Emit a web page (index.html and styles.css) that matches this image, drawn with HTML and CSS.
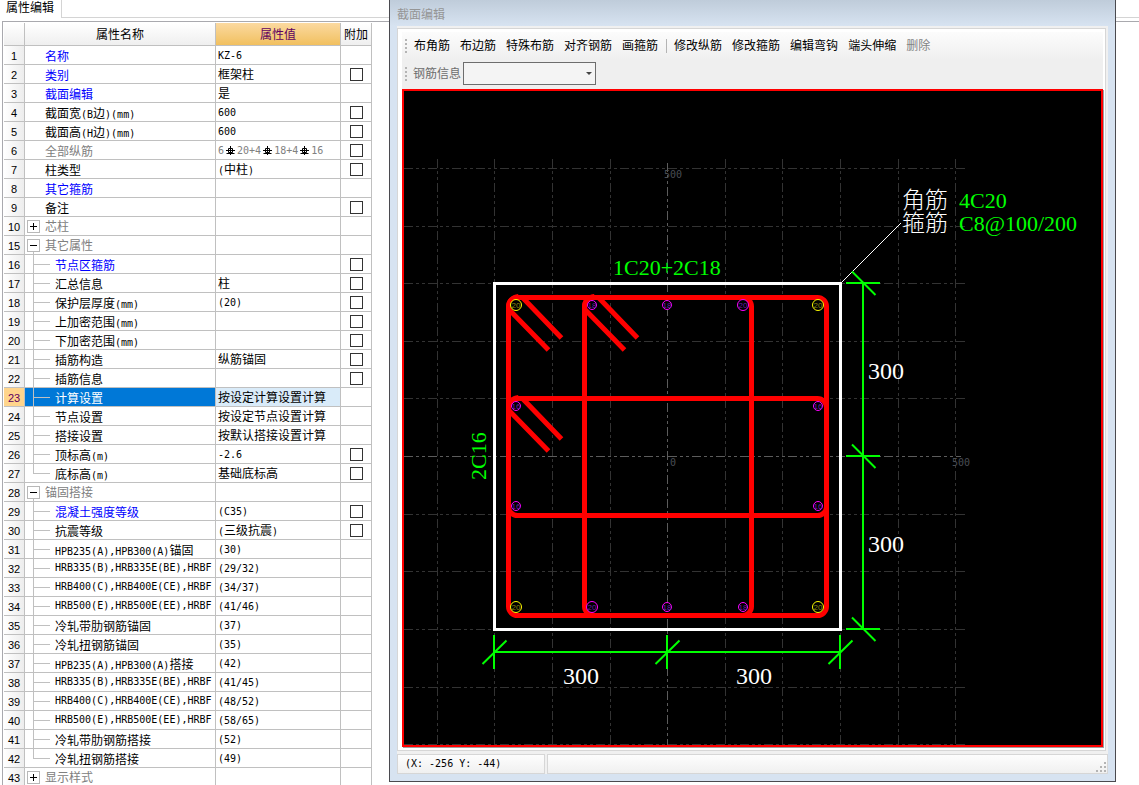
FILE: index.html
```html
<!DOCTYPE html>
<html lang="zh-CN">
<head>
<meta charset="utf-8">
<title>属性编辑</title>
<link rel="stylesheet" href="styles.css">
</head>
<body>
<main class="desk">
<section class="props">
<div class="tabs"><button class="tab" type="button">属性编辑</button><div class="tab-rest"></div></div>
<div class="grid-wrap">
<table class="grid">
<colgroup><col class="c-no"><col class="c-name"><col class="c-val"><col class="c-add"></colgroup>
<thead><tr><th></th><th>属性名称</th><th class="active">属性值</th><th>附加</th></tr></thead>
<tbody>
<tr><th>1</th><td class="top blue">名称</td><td class="mono">KZ-6</td><td></td></tr>
<tr><th>2</th><td class="top blue">类别</td><td>框架柱</td><td><input type="checkbox" aria-label="类别"></td></tr>
<tr><th>3</th><td class="top blue">截面编辑</td><td>是</td><td></td></tr>
<tr><th>4</th><td class="top">截面宽<span class="mono">(B</span>边<span class="mono">)(mm)</span></td><td class="mono">600</td><td><input type="checkbox" aria-label="截面宽"></td></tr>
<tr><th>5</th><td class="top">截面高<span class="mono">(H</span>边<span class="mono">)(mm)</span></td><td class="mono">600</td><td><input type="checkbox" aria-label="截面高"></td></tr>
<tr><th>6</th><td class="top gray">全部纵筋</td><td class="mono gray">6<svg class="bar" viewBox="0 0 13 11"><use href="#rebar"/></svg>20+4<svg class="bar" viewBox="0 0 13 11"><use href="#rebar"/></svg>18+4<svg class="bar" viewBox="0 0 13 11"><use href="#rebar"/></svg>16</td><td><input type="checkbox" aria-label="全部纵筋"></td></tr>
<tr><th>7</th><td class="top">柱类型</td><td><span class="mono">(</span>中柱<span class="mono">)</span></td><td><input type="checkbox" aria-label="柱类型"></td></tr>
<tr><th>8</th><td class="top blue">其它箍筋</td><td></td><td></td></tr>
<tr><th>9</th><td class="top">备注</td><td></td><td><input type="checkbox" aria-label="备注"></td></tr>
<tr><th>10</th><td class="group gray"><div><button class="exp plus" type="button" aria-label="展开"></button>芯柱</div></td><td></td><td></td></tr>
<tr><th>15</th><td class="group gray open"><div><button class="exp" type="button" aria-label="折叠"></button>其它属性</div></td><td></td><td></td></tr>
<tr><th>16</th><td class="kid blue">节点区箍筋</td><td></td><td><input type="checkbox" aria-label="节点区箍筋"></td></tr>
<tr><th>17</th><td class="kid">汇总信息</td><td>柱</td><td><input type="checkbox" aria-label="汇总信息"></td></tr>
<tr><th>18</th><td class="kid">保护层厚度<span class="mono">(mm)</span></td><td class="mono">(20)</td><td><input type="checkbox" aria-label="保护层厚度"></td></tr>
<tr><th>19</th><td class="kid">上加密范围<span class="mono">(mm)</span></td><td></td><td><input type="checkbox" aria-label="上加密范围"></td></tr>
<tr><th>20</th><td class="kid">下加密范围<span class="mono">(mm)</span></td><td></td><td><input type="checkbox" aria-label="下加密范围"></td></tr>
<tr><th>21</th><td class="kid">插筋构造</td><td>纵筋锚固</td><td><input type="checkbox" aria-label="插筋构造"></td></tr>
<tr><th>22</th><td class="kid">插筋信息</td><td></td><td><input type="checkbox" aria-label="插筋信息"></td></tr>
<tr class="selected"><th>23</th><td class="kid">计算设置</td><td>按设定计算设置计算</td><td></td></tr>
<tr><th>24</th><td class="kid">节点设置</td><td>按设定节点设置计算</td><td></td></tr>
<tr><th>25</th><td class="kid">搭接设置</td><td>按默认搭接设置计算</td><td></td></tr>
<tr><th>26</th><td class="kid">顶标高<span class="mono">(m)</span></td><td class="mono">-2.6</td><td><input type="checkbox" aria-label="顶标高"></td></tr>
<tr><th>27</th><td class="kid last">底标高<span class="mono">(m)</span></td><td>基础底标高</td><td><input type="checkbox" aria-label="底标高"></td></tr>
<tr><th>28</th><td class="group gray open"><div><button class="exp" type="button" aria-label="折叠"></button>锚固搭接</div></td><td></td><td></td></tr>
<tr><th>29</th><td class="kid blue">混凝土强度等级</td><td class="mono">(C35)</td><td><input type="checkbox" aria-label="混凝土强度等级"></td></tr>
<tr><th>30</th><td class="kid">抗震等级</td><td><span class="mono">(</span>三级抗震<span class="mono">)</span></td><td><input type="checkbox" aria-label="抗震等级"></td></tr>
<tr><th>31</th><td class="kid"><span class="mono">HPB235(A),HPB300(A)</span>锚固</td><td class="mono">(30)</td><td></td></tr>
<tr><th>32</th><td class="kid mono">HRB335(B),HRB335E(BE),HRBF</td><td class="mono">(29/32)</td><td></td></tr>
<tr><th>33</th><td class="kid mono">HRB400(C),HRB400E(CE),HRBF</td><td class="mono">(34/37)</td><td></td></tr>
<tr><th>34</th><td class="kid mono">HRB500(E),HRB500E(EE),HRBF</td><td class="mono">(41/46)</td><td></td></tr>
<tr><th>35</th><td class="kid">冷轧带肋钢筋锚固</td><td class="mono">(37)</td><td></td></tr>
<tr><th>36</th><td class="kid">冷轧扭钢筋锚固</td><td class="mono">(35)</td><td></td></tr>
<tr><th>37</th><td class="kid"><span class="mono">HPB235(A),HPB300(A)</span>搭接</td><td class="mono">(42)</td><td></td></tr>
<tr><th>38</th><td class="kid mono">HRB335(B),HRB335E(BE),HRBF</td><td class="mono">(41/45)</td><td></td></tr>
<tr><th>39</th><td class="kid mono">HRB400(C),HRB400E(CE),HRBF</td><td class="mono">(48/52)</td><td></td></tr>
<tr><th>40</th><td class="kid mono">HRB500(E),HRB500E(EE),HRBF</td><td class="mono">(58/65)</td><td></td></tr>
<tr><th>41</th><td class="kid">冷轧带肋钢筋搭接</td><td class="mono">(52)</td><td></td></tr>
<tr><th>42</th><td class="kid last">冷轧扭钢筋搭接</td><td class="mono">(49)</td><td></td></tr>
<tr><th>43</th><td class="group gray"><div><button class="exp plus" type="button" aria-label="展开"></button>显示样式</div></td><td></td><td></td></tr>
</tbody>
</table>
</div>
</section>

<section class="dialog">
<h1 class="title">截面编辑</h1>
<div class="frame">
<div class="sheet">
<div class="bars">
<div class="bar-row">
<span class="grip"></span>
<button type="button">布角筋</button><button type="button">布边筋</button><button type="button">特殊布筋</button><button type="button">对齐钢筋</button><button type="button">画箍筋</button>
<span class="sep"></span>
<button type="button">修改纵筋</button><button type="button">修改箍筋</button><button type="button">编辑弯钩</button><button type="button">端头伸缩</button><button type="button" disabled>删除</button>
</div>
<div class="bar-row second">
<span class="grip"></span>
<label for="info">钢筋信息</label>
<span class="combo"><select id="info"><option></option></select></span>
</div>
</div>
<div class="canvas">
<svg class="drawing" viewBox="404 91 697 654">
<defs>
<g id="rebar" fill="none" stroke="#000"><path d="M6.500 1v9M2.500 8.500h8"/><path d="M4.500 3.500h4v4h-4z"/><path d="M2 5.500h9"/></g>
<g id="hook"><path d="M508.500 309l40 41M522 297l39.500 41"/><path d="M508.500 308q0-10 10-11.500" /></g>
<g id="tickv"><path d="M846 283h34M852 271.500l23.500 23.500"/></g>
<g id="tickh"><path d="M494 635v34M482.500 664l24-23.500"/></g>
</defs>
<g class="mesh">
<path d="M404 168.500H965M404 226.500H965M404 283.500H965M404 341.500H965M404 398.500H965M404 514.500H965M404 571.500H965M404 629.500H965M404 687.500H965M404 744.500H965"/>
<path d="M437.500 159V745M494.500 159V745M552.500 159V745M610.500 159V745M725.500 159V745M782.500 159V745M840.500 159V745M898.500 159V745M955.500 159V745"/>
<path class="axis" d="M404 456.500H961M667.500 163V745"/>
</g>
<g class="scale"><text x="664" y="178">500</text><text x="670" y="466">0</text><text x="952" y="466">500</text></g>
<rect class="concrete" x="494.500" y="283.500" width="346" height="346"/>
<g class="stirrup">
<rect x="508.500" y="297.500" width="318" height="318" rx="9"/>
<rect x="584.500" y="297.500" width="167" height="318" rx="9"/>
<rect x="508.500" y="398.500" width="318" height="117" rx="9"/>
<use href="#hook"/><use href="#hook" x="76"/><use href="#hook" y="101"/>
</g>
<g class="corner">
<circle cx="516" cy="305" r="5.500"/><circle cx="818" cy="305" r="5.500"/><circle cx="516" cy="607" r="5.500"/><circle cx="818" cy="607" r="5.500"/>
<text x="516" y="308">20</text><text x="818" y="308">20</text><text x="516" y="610">20</text><text x="818" y="610">20</text>
</g>
<g class="side">
<circle cx="592" cy="305" r="4.500"/><circle cx="667" cy="305" r="4.500"/><circle cx="743" cy="305" r="5.500"/>
<circle cx="516" cy="406" r="4.500"/><circle cx="818" cy="406" r="4.500"/><circle cx="516" cy="506" r="4.500"/><circle cx="818" cy="506" r="4.500"/>
<circle cx="592" cy="607" r="5.500"/><circle cx="667" cy="607" r="4.500"/><circle cx="743" cy="607" r="4.500"/>
<text x="592" y="308">18</text><text x="667" y="308">18</text><text x="743" y="308">20</text>
<text x="516" y="409">16</text><text x="818" y="409">16</text><text x="516" y="509">16</text><text x="818" y="509">16</text>
<text x="592" y="610">20</text><text x="667" y="610">18</text><text x="743" y="610">18</text>
</g>
<path class="leader" d="M841 283L901 223"/>
<g class="dims">
<path d="M863 283V629M494 652H840"/>
<use href="#tickv"/><use href="#tickv" y="173"/><use href="#tickv" y="346"/>
<use href="#tickh"/><use href="#tickh" x="173"/><use href="#tickh" x="346"/>
</g>
<g class="length"><text x="868" y="379">300</text><text x="868" y="552">300</text><text x="563" y="684">300</text><text x="736" y="684">300</text></g>
<g class="caption"><text x="902" y="208">角筋</text><text x="902" y="231">箍筋</text></g>
<g class="steel"><text x="959" y="208">4C20</text><text x="959" y="231">C8@100/200</text><text x="613" y="275">1C20+2C18</text><text transform="translate(486 480) rotate(-90)">2C16</text></g>
</svg>
</div>
</div>
<div class="status">
<div class="cell coord">(X: -256 Y: -44)</div>
<div class="cell rest">
<svg class="sizer" viewBox="0 0 10 10"><path d="M8 0h2v2h-2zM4 4h2v2h-2zM8 4h2v2h-2zM0 8h2v2h-2zM4 8h2v2h-2zM8 8h2v2h-2z"/></svg>
</div>
</div>
</div>
</section>
</main>
</body>
</html>
```
FILE: styles.css
```css
* { box-sizing: border-box; }
body {
  margin: 0;
  background: #fff;
  color: #000;
  font: 12px/16px "Liberation Sans", "Noto Sans CJK SC", sans-serif;
}
button, select { font: inherit; color: inherit; margin: 0; padding: 0; border: 0; background: none; }

.desk { position: relative; height: 100vh; overflow: hidden; }

/* property panel */
.tabs { display: flex; height: 18px; }
.tab { width: 61px; padding: 0 0 2px 6px; text-align: left; white-space: nowrap; }
.tab-rest { flex: 1; border: solid #d4d4d4; border-width: 0 0 1px 1px; }
.grid-wrap { margin: 3px 0 0 2px; padding: 1px 0 0 1px; border: solid #a9a9ae; border-width: 1px 0 0 1px; }
.grid { border-collapse: separate; border-spacing: 0; table-layout: fixed; width: 368px; }
.c-no { width: 21px; }
.c-name { width: 191px; }
.c-val { width: 125px; }
.c-add { width: 31px; }
.grid th, .grid td {
  height: 19px;
  padding: 2px 0 0;
  border: solid #c0c0c0;
  border-width: 0 1px 1px 0;
  line-height: 14px;
  white-space: nowrap;
  overflow: hidden;
  text-align: left;
  vertical-align: middle;
}
.grid thead th {
  height: 23px;
  text-align: center;
  font-weight: normal;
  background: linear-gradient(#fff, #efefef);
}
.grid thead .active { background: linear-gradient(#fbd9a0, #f1c05f); color: #600060; }
.grid tbody th {
  font: 11px/14px "Liberation Sans", sans-serif;
  text-align: center;
  background: linear-gradient(90deg, #fff, #ededed);
}
.grid td { padding-left: 2px; }
.grid td:last-child { padding: 0; text-align: center; }
.mono { font-family: "DejaVu Sans Mono", monospace; font-size: 10px; }
span.mono { line-height: 10px; }
.grid td.top { padding: 4px 0 0 20px; }
.grid td.kid {
  padding: 4px 0 0 30px;
  background:
    linear-gradient(#c0c0c0, #c0c0c0) 8px 0 / 1px 100% no-repeat,
    linear-gradient(#c0c0c0, #c0c0c0) 9px 9px / 16px 1px no-repeat;
}
.grid td.kid.mono { padding-top: 0; }
.grid td.last { background-size: 1px 10px, 16px 1px; }
.grid td.group { padding: 0 0 0 2px; }
.group div { display: flex; align-items: center; gap: 5px; height: 18px; padding-top: 1px; }
.grid td.open { background: linear-gradient(#c0c0c0, #c0c0c0) 8px 15px / 1px 4px no-repeat; }
.exp {
  width: 13px;
  height: 13px;
  border: 1px solid #b8b8b8;
  background: linear-gradient(#000, #000) 2px 5px / 7px 1px no-repeat, #fff;
}
.exp.plus {
  background: linear-gradient(#000, #000) 2px 5px / 7px 1px no-repeat,
    linear-gradient(#000, #000) 5px 2px / 1px 7px no-repeat, #fff;
}
.blue { color: #00f; }
.gray { color: #808080; }
.grid input {
  appearance: none;
  display: block;
  width: 13px;
  height: 13px;
  margin: 0 auto;
  border: 1px solid #333;
  background: #fff;
}
.bar { width: 13px; height: 11px; vertical-align: -2px; }
.selected td:nth-child(2) { background-color: #0078d7; color: #fff; }
.selected td:nth-child(3) { background: #d9ebf9; }
.grid .selected th { background: #ffd58c; color: #600060; }

/* section window */
.dialog {
  position: absolute;
  inset: 0 23px 3px 389px;
  display: flex;
  flex-direction: column;
  padding: 0 7px 7px;
  border: solid #4a4a4f;
  border-width: 0 1px 1px;
  background: linear-gradient(#bfccda, #d7e3f1 26px);
}
.title { margin: 0; height: 26px; padding-top: 7px; font-size: 12px; line-height: 16px; font-weight: normal; color: #959595; }
.frame { flex: 1; display: flex; flex-direction: column; min-height: 0; padding-top: 2px; background: #f0f0f0; }
.sheet {
  flex: 1;
  display: flex;
  flex-direction: column;
  min-height: 0;
  margin-right: 2px;
  padding: 3px 2px 3px 4px;
  border: 1px solid #d6d6d6;
  background: #fff;
}
.bars { background: linear-gradient(#fcfcfc, #efefef 28px); }
.bar-row { display: flex; align-items: center; height: 28px; padding-left: 3px; gap: 10px; white-space: nowrap; }
.bar-row button { line-height: 16px; }
.bar-row button:disabled { color: #838383; }
.grip { width: 2px; height: 14px; margin-right: -3px; background: repeating-linear-gradient(#b4b4b4 0 2px, transparent 2px 4px); }
.sep { width: 1px; height: 14px; margin: 0 -3px 0 -2px; background: #b4b4b4; }
.bar-row.second { height: 29px; padding-bottom: 2px; gap: 2px; color: #6d6d6d; }
.second .grip { margin-right: 4px; }
.combo { position: relative; }
.combo::after {
  content: "";
  position: absolute;
  right: 4px;
  top: 10px;
  border: 3px solid transparent;
  border-top-color: #444;
  border-bottom: 0;
  pointer-events: none;
}
.combo select { display: block; appearance: none; width: 133px; height: 23px; border: 1px solid #6d6d6d; border-radius: 0; background: #f4f4f4; }
.canvas { flex: 1; min-height: 0; border: 2px solid #f00; background: #000; box-shadow: 1px 1px #a0a0a0; }
.drawing { display: block; width: 100%; height: 100%; }
.status { display: flex; gap: 2px; padding-top: 3px; }
.cell { height: 20px; border: 1px solid #d6d6d6; background: linear-gradient(#fdfdfd, #f0f0f0); }
.coord { width: 148px; padding-left: 7px; font: 10px/18px "DejaVu Sans Mono", monospace; }
.rest { flex: 1; display: flex; justify-content: flex-end; align-items: flex-end; padding: 0 1px 1px 0; }
.sizer { width: 10px; height: 10px; fill: #b4b4b4; }

/* drawing */
.mesh { fill: none; stroke: #333; stroke-dasharray: 9 3 3 3 3 3; }
.mesh .axis { stroke: #5c5c5c; }
.scale { font: 10px "DejaVu Sans Mono", monospace; fill: #4a4e54; }
.concrete { fill: none; stroke: #fff; stroke-width: 3; }
.stirrup { fill: none; stroke: #f00; stroke-width: 5; }
.corner circle { fill: #000; stroke: #ff0; }
.side circle { fill: #000; stroke: #f0f; }
.corner text, .side text { font: 8px "Liberation Sans", sans-serif; text-anchor: middle; }
.corner text { fill: #8a8a10; }
.side text { fill: #6a1fa8; }
.leader { stroke: #fff; }
.dims { fill: none; stroke: #0f0; stroke-width: 2; }
.length { font: 24px "Liberation Serif", serif; fill: #fff; }
.caption { font: 300 23px "Noto Sans CJK SC", sans-serif; fill: #fff; }
.steel { font: 22px "Liberation Serif", serif; fill: #0f0; }
```
